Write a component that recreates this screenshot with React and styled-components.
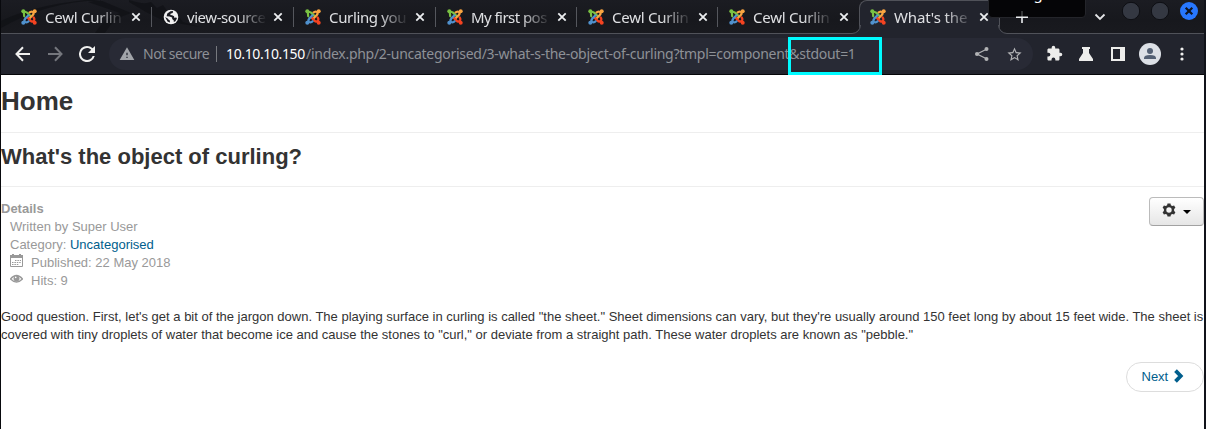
import React from 'react';
import styled, { createGlobalStyle, css } from 'styled-components';

const Global = createGlobalStyle`
  *, *::before, *::after { box-sizing: border-box; }
  html, body { margin: 0; padding: 0; overflow: hidden; background: #fff; }
  h1, h2, p, dl, dt, dd { margin: 0; }
`;

const ui = css`font-family: "Noto Sans", "Open Sans", sans-serif;`;

const Window = styled.div`
  width: 1206px;
  height: 429px;
  overflow: hidden;
  position: relative;
  display: flex;
  flex-direction: column;
  background: #fff;
  border-left: 1px solid #08090d;
  border-right: 2px solid #11131a;
`;

const TabStrip = styled.div`
  ${ui}
  flex: none;
  height: 34px;
  display: flex;
  align-items: stretch;
  position: relative;
  background:
    linear-gradient(#505259, #505259) 0 33px / 100% 1px no-repeat,
    linear-gradient(#1b1c22, #17181d 60%, #191a1f);
`;

const Backdrop = styled.svg`
  position: absolute;
  left: 0;
  top: 0;
`;

const Tab = styled.div`
  position: relative;
  flex: none;
  width: ${p => p.$w}px;
  padding-left: ${p => p.$pad}px;
  display: flex;
  align-items: center;
  color: #dfe0e3;
  &::after {
    content: "";
    position: absolute;
    right: 0;
    top: 7px;
    width: 1px;
    height: 20px;
    background: ${p => (p.$last ? 'transparent' : '#55575d')};
  }
`;

const ActiveTab = styled(Tab)`
  height: 34px;
  padding-bottom: 1px;
  background: #22242d;
  border: 1px solid #505259;
  border-bottom: 0;
  border-radius: 8px 8px 0 0;
  &::after { display: none; }
`;

const Flare = styled.svg`
  position: absolute;
  bottom: 0;
  ${p => (p.$right ? 'right: -8px; transform: scaleX(-1);' : 'left: -8px;')}
`;

const Title = styled.span`
  width: ${p => p.$w || 80}px;
  margin-left: 8px;
  margin-right: 5px;
  white-space: nowrap;
  font-size: 15px;
  line-height: 24px;
  letter-spacing: ${p => p.$ls || 0}px;
  mask-image: linear-gradient(90deg, #000 50px, transparent 80px);
`;

const Svg = styled.svg`
  display: block;
  flex: none;
`;

const Toolbar = styled.div`
  ${ui}
  flex: none;
  height: 41px;
  display: flex;
  align-items: center;
  padding: 0 0 1px 14px;
  background: #22242d;
  border-bottom: 1px solid #050608;
`;

const Nav = styled.div`
  display: flex;
  gap: 16px;
  width: 94px;
  flex: none;
`;

const Address = styled.div`
  flex: none;
  width: 924px;
  height: 32px;
  margin-top: 1px;
  border-radius: 16px;
  background: #282a35;
  display: flex;
  align-items: center;
  padding: 0 10px;
  color: #8e9197;
  font-size: 14px;
  line-height: 20px;
  white-space: nowrap;
`;

const Security = styled.span`
  width: 67px;
  margin: 0 6px 0 8px;
  letter-spacing: ${p => p.$ls}px;
`;

const Divider = styled.span`
  width: 1px;
  height: 16px;
  background: #77797f;
  margin-right: 9px;
`;

const Host = styled.span`
  width: 80px;
  color: #fff;
  letter-spacing: ${p => p.$ls}px;
`;

const Path = styled.span`
  flex: 1;
  letter-spacing: ${p => p.$ls}px;
`;

const AddressActions = styled.div`
  display: flex;
  gap: 16px;
`;

const Extensions = styled.div`
  display: flex;
  align-items: center;
  margin-left: 13px;
`;

const Avatar = styled.div`
  margin: 0 12px 0 13px;
`;

const Highlight = styled.div`
  position: absolute;
  left: 787.4px;
  top: 37px;
  width: 94px;
  height: 38px;
  border: 3px solid #00fbff;
`;

const Bubble = styled.div`
  ${ui}
  position: absolute;
  left: 987px;
  top: -18px;
  width: 98px;
  height: 36px;
  border: 1px solid #24252a;
  border-radius: 4px;
  background: #050507;
  color: #fff;
  font-size: 15px;
  line-height: 20px;
  text-align: center;
`;

const Page = styled.main`
  flex: 1;
  font: 13px/18px "Liberation Sans", Arial, sans-serif;
  color: #333;
`;

const HomeHeader = styled.header`
  height: 58px;
  padding-top: 8px;
  border-bottom: 1px solid #eee;
`;

const Home = styled.h1`
  font-size: 26px;
  line-height: 36px;
`;

const ArticleHeader = styled.header`
  height: 54px;
  padding-top: 6px;
  border-bottom: 1px solid #eee;
`;

const Headline = styled.h2`
  font-size: 22px;
  line-height: 36px;
`;

const Info = styled.section`
  display: flex;
  justify-content: space-between;
  align-items: flex-start;
  height: 121px;
  padding-top: 10px;
`;

const Details = styled.dl`
  padding-top: 3px;
  color: #999;
`;

const Term = styled.dt`
  font-weight: bold;
`;

const Detail = styled.dd`
  display: flex;
  margin-left: 9px;
  white-space: pre;
  svg { margin-right: 8px; }
`;

const Link = styled.a`
  color: #005e8d;
`;

const GearButton = styled.button`
  display: flex;
  align-items: center;
  width: 55px;
  height: 29px;
  padding: 0 0 0 12px;
  border: 1px solid #bbb;
  border-bottom-color: #a2a2a2;
  border-radius: 4px;
  background: linear-gradient(#fff, #e6e6e6);
  gap: 7px;
`;

const GearIcon = styled.svg`
  margin-bottom: 4px;
`;

const Caret = styled.svg`
  margin-bottom: 3px;
`;

const Body = styled.p`
  white-space: nowrap;
`;

const Pager = styled.nav`
  display: flex;
  justify-content: flex-end;
  padding-top: 18px;
`;

const Next = styled.a`
  display: flex;
  align-items: center;
  width: 78px;
  height: 30px;
  padding-left: 14.5px;
  gap: 6px;
  border: 1px solid #ddd;
  border-radius: 15px;
  color: #005e8d;
  svg { margin-bottom: 2px; }
`;

const WindowControls = styled.div`
  position: absolute;
  left: ${p => p.$x}px;
  top: 0;
`;

const Joomla = () => (
  <Svg width="16" height="16" viewBox="0 0 16 16">
    <g fill="none" strokeWidth="2.2" strokeLinejoin="round">
      <path stroke="#7ac143" d="M2.7 8C4 6.6 2.4 5.2 3 3.7c1-1.3 2.5-.7 3.4.2l3.8 3.8" />
      <path stroke="#f9a541" d="M8 3.9c1.4-1.3 2.5-1.8 4-1 .9 1.1.7 2.3-.4 3.4L7.9 10" />
      <path stroke="#f44321" d="M12.1 7.7c1.2 1.2 1.7 2.5.9 4.1-1.2 1-2.6.8-3.7-.4L5.7 7.8" />
      <path stroke="#5091cd" d="M8.2 11.8c-1.4 1.4-2.6 2-4.2 1.2-.9-1.1-.7-2.4.4-3.6L8 5.8" />
    </g>
    <circle cx="2.3" cy="2.3" r="2" fill="#7ac143" />
    <circle cx="13.7" cy="2.3" r="2" fill="#f9a541" />
    <circle cx="13.7" cy="13.7" r="2" fill="#f44321" />
    <circle cx="2.3" cy="13.7" r="2" fill="#5091cd" />
  </Svg>
);

const Globe = () => (
  <Svg width="16" height="16" viewBox="0 0 16 16">
    <circle cx="8" cy="8" r="7.3" fill="#f1f1f1" />
    <path fill="#191a20" d="M7.5 2.2 9.8 2l.3 1.2-1 1.1-1.4.3-.4 1.5 1.8.2 2 .9.1 1.5 2.1-.1.6 1-1.5 2.6-1.6.8v-1.6L9.2 10l-.1-1.5-2.5-1-3-.3.7-2.6zM2.1 8.1l2.6 1.5 1 1.2 1.2.8v2l-2.4-1z" />
  </Svg>
);

const Close = () => (
  <Svg width="12" height="12" viewBox="0 0 12 12">
    <path d="m2.3 2.3 7.4 7.4m0-7.4L2.3 9.7" stroke="#eceef0" strokeWidth="1.8" />
  </Svg>
);

const Chrome = ({ d, color = '#ededeb', size = 20 }) => (
  <Svg width={size} height={size} viewBox="0 0 24 24" fill={color}><path d={d} /></Svg>
);

const tabs = [
  { title: 'Cewl Curlin', w: 151, pad: 20, ls: -0.25 },
  { title: 'view-source', w: 142, pad: 11, ls: -0.45, globe: true },
  { title: 'Curling you', w: 142, pad: 11, ls: -0.35 },
  { title: 'My first pos', w: 141, pad: 11, ls: -0.55 },
  { title: 'Cewl Curlin', w: 141, pad: 11, ls: -0.25 },
  { title: 'Cewl Curlin', w: 141, pad: 11, ls: -0.25, last: true },
];

const flarePath = 'M0 8A8 8 0 0 0 8 0V9H0Z';

export default function App() {
  return (
    <Window>
      <Global />
      <TabStrip>
        <Backdrop width="300" height="33" viewBox="0 0 300 33">
          <path d="M0 28Q45 2 100 0H84Q30 6 0 21ZM94 33Q103 18 119 13L87 2 99 0 130 13Q112 18 104 33ZM128 0q15 5 22 2l6 6 6-3 5 7 6-2 9 12 17 5-36-6q-18-8-35-19Z" fill="#101115" opacity=".75" />
        </Backdrop>
        {tabs.map((t, i) => (
          <Tab key={i} $w={t.w} $pad={t.pad} $last={t.last}>
            {t.globe ? <Globe /> : <Joomla />}
            <Title $ls={t.ls}>{t.title}</Title>
            <Close />
          </Tab>
        ))}
        <ActiveTab $w={141} $pad={10}>
          <Flare width="9" height="9"><path d={flarePath} fill="#22242d" /><path d="M0 8.5A8.5 8.5 0 0 0 8.5 0" fill="none" stroke="#505259" /></Flare>
          <Joomla />
          <Title $ls={-0.12} $w={79}>What's the</Title>
          <Close />
          <Flare $right width="9" height="9"><path d={flarePath} fill="#22242d" /><path d="M0 8.5A8.5 8.5 0 0 0 8.5 0" fill="none" stroke="#505259" /></Flare>
        </ActiveTab>
        <WindowControls $x={1092}>
          <Svg width="112" height="33" viewBox="1093 0 112 33">
            <path d="m1095.5 14.5 4.5 4.5 4.5-4.5" fill="none" stroke="#e4e5e7" strokeWidth="1.8" />
            <g stroke="#0d0e13" strokeWidth="1">
              <circle cx="1131" cy="11" r="8.7" fill="#343842" />
              <circle cx="1160" cy="11" r="8.7" fill="#343842" />
            </g>
            <circle cx="1189" cy="11" r="9" fill="#2777ff" />
            <path d="m1185.7 7.7 6.6 6.6m0-6.6-6.6 6.6" stroke="#10141f" strokeWidth="2.2" />
          </Svg>
        </WindowControls>
        <Bubble>Navigator</Bubble>
        <WindowControls $x={1014}>
          <Svg width="14" height="33">
            <path d="M7 11v6" stroke="#3a3b3d" strokeWidth="1.8" />
            <path d="M7 17v6M1 17.3h12" stroke="#eceef0" strokeWidth="1.6" />
          </Svg>
        </WindowControls>
      </TabStrip>
      <Toolbar>
        <Nav>
          <Svg width="16" height="16" viewBox="0 0 16 16"><path d="M15 8H2M8 1.3 1.5 8 8 14.7" stroke="#f0f0ef" strokeWidth="2" fill="none" /></Svg>
          <Svg width="16" height="16" viewBox="0 0 16 16"><path d="M1 8h13M8 1.3 14.5 8 8 14.7" stroke="#75777d" strokeWidth="2" fill="none" /></Svg>
          <Svg width="16" height="16" viewBox="4 4 16 16"><path fill="#f0f0ef" d="M17.65 6.35A7.96 7.96 0 0 0 12 4a8 8 0 1 0 7.73 10h-2.08A6 6 0 1 1 12 6c1.66 0 3.14.69 4.22 1.78L13 11h7V4z" /></Svg>
        </Nav>
        <Address>
          <Chrome d="M1 21h22L12 2zm12-3h-2v-2h2zm0-4h-2v-4h2z" color="#a1a4a9" size={16} />
          <Security $ls={-0.5}>Not secure</Security>
          <Divider />
          <Host $ls={-0.38}>10.10.10.150</Host>
          <Path $ls={-0.28}>/index.php/2-uncategorised/3-what-s-the-object-of-curling?tmpl=component&amp;stdout=1</Path>
          <AddressActions>
            <Svg width="16" height="16" viewBox="0 0 16 16" fill="#b2b3b5"><path d="M13 3 3 8l10 5" fill="none" stroke="#b2b3b5" strokeWidth="1.3" /><circle cx="12.5" cy="3" r="2" /><circle cx="3" cy="8" r="2" /><circle cx="12.5" cy="13" r="2" /></Svg>
            <Chrome d="m22 9.24-7.19-.62L12 2 9.19 8.63 2 9.24l5.46 4.73L5.82 21 12 17.27 18.18 21l-1.63-7.03zM12 15.4l-3.76 2.27 1-4.28-3.32-2.88 4.38-.38L12 6.1l1.71 4.04 4.38.38-3.32 2.88 1 4.28z" color="#b2b3b5" size={17} />
          </AddressActions>
        </Address>
        <Extensions>
          <Chrome d="M20.5 11H19V7c0-1.1-.9-2-2-2h-4V3.5a2.5 2.5 0 0 0-5 0V5H4c-1.1 0-2 .9-2 2v3.8h1.5a2.7 2.7 0 0 1 0 5.4H2V20c0 1.1.9 2 2 2h3.8v-1.5a2.7 2.7 0 0 1 5.4 0V22H17c1.1 0 2-.9 2-2v-4h1.5a2.5 2.5 0 0 0 0-5" size={17} />
          <Svg width="46" height="16" viewBox="-15 0 46 16"><path fill="#ededeb" d="M4 1h8v2h-1v4l4 6v2H1v-2l4-6V3H4z" /></Svg>
          <Svg width="17" height="16" viewBox="-1 0 17 16"><path fill="#ededeb" fillRule="evenodd" d="M1 1h14v14H1zM3 3v10h7V3z" /></Svg>
          <Avatar><Svg width="22" height="22" viewBox="0 0 22 22"><circle cx="11" cy="11" r="11" fill="#dce0e6" /><circle cx="11" cy="8" r="3" fill="#536074" /><path d="M5 16v-1q0-3 6-3t6 3v1z" fill="#536074" /></Svg></Avatar>
          <Svg width="18" height="16" viewBox="0 0 18 16" fill="#f0f0ef"><circle cx="9" cy="3" r="1.6" /><circle cx="9" cy="8" r="1.6" /><circle cx="9" cy="13" r="1.6" /></Svg>
        </Extensions>
      </Toolbar>
      <Highlight />
      <Page>
        <HomeHeader><Home>Home</Home></HomeHeader>
        <ArticleHeader><Headline>What's the object of curling?</Headline></ArticleHeader>
        <Info>
          <Details>
            <Term>Details</Term>
            <Detail>Written by Super User</Detail>
            <Detail>Category: <Link>Uncategorised</Link></Detail>
            <Detail>
              <Svg width="13" height="15" viewBox="0 0 13 15"><path d="M.5 4v8.5h12V4M2 .5h2M9 .5h2" fill="none" stroke="#999" /><path d="M0 1h13v3H0z" fill="#999" /><path d="M5 6.5h6M2 8.5h9M2 10.5h7" stroke="#999" strokeWidth="1.2" strokeDasharray="1.5 .9" /></Svg>
              Published: 22 May 2018
            </Detail>
            <Detail>
              <Svg width="13" height="15" viewBox="0 0 13 15"><path d="M.5 7Q6.5 0 12.5 7 6.5 13 .5 7Z" fill="none" stroke="#999" strokeWidth="1.3" /><circle cx="6.5" cy="6.5" r="3" fill="#999" /><circle cx="5.7" cy="5.4" r=".8" fill="#fff" /></Svg>
              Hits: 9
            </Detail>
          </Details>
          <GearButton>
            <GearIcon width="14" height="14" viewBox="0 0 14 14"><path fillRule="evenodd" fill="#333" d="M5.5.5h3l.4 1.7 1.3.8 1.9-.6 1.3 2.4L12.1 6v2l1.3 1.3-1.3 2.3-1.9-.6-1.3.8-.4 1.7h-3l-.4-1.7-1.3-.8-1.9.6L.6 9.3 1.9 8V6L.6 4.8l1.3-2.4 1.9.6 1.3-.8zM7 4.3a2.7 2.7 0 1 0 0 5.4 2.7 2.7 0 0 0 0-5.4z" /></GearIcon>
            <Caret width="8" height="10" viewBox="0 0 8 10"><path d="M0 5h8L4 9z" /></Caret>
          </GearButton>
        </Info>
        <Body>Good question. First, let's get a bit of the jargon down. The playing surface in curling is called "the sheet." Sheet dimensions can vary, but they're usually around 150 feet long by about 15 feet wide. The sheet is<br />covered with tiny droplets of water that become ice and cause the stones to "curl," or deviate from a straight path. These water droplets are known as "pebble."</Body>
        <Pager><Next>Next<Svg width="10" height="14" viewBox="0 0 10 14"><path d="m1.5 1.7 5.2 5.3-5.2 5.3" fill="none" stroke="#005e8d" strokeWidth="3.8" /></Svg></Next></Pager>
      </Page>
    </Window>
  );
}
